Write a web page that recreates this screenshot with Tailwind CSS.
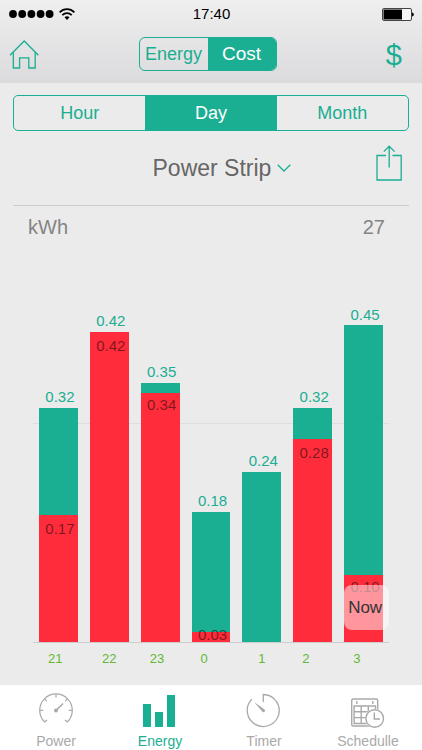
<!DOCTYPE html>
<html lang="en">
<head>
    <meta charset="UTF-8">
    <meta name="viewport" content="width=device-width, initial-scale=1.0">
    <title>Energy</title>
    <script src="https://cdn.jsdelivr.net/npm/@tailwindcss/browser@4"></script>
</head>
<body class="bg-[#ebebeb] min-h-screen flex flex-col font-['Liberation_Sans',Arial,sans-serif] text-[#1aae92]">

    <!-- Header -->
    <header class="bg-linear-to-b from-[#efeff0] to-[#dbdbdd] pb-3">
        <!-- Status bar -->
        <div class="flex items-center h-7 pl-[9px] pr-2 text-black">
            <div class="flex-1 flex items-center gap-1">
                <svg class="w-[46px] h-2" viewBox="0 0 46 8" fill="currentColor">
                    <circle cx="4" cy="4" r="3.9"/>
                    <circle cx="13.2" cy="4" r="3.9"/>
                    <circle cx="22.4" cy="4" r="3.9"/>
                    <circle cx="31.6" cy="4" r="3.9"/>
                    <circle cx="40.6" cy="4" r="3.9"/>
                </svg>
                <svg class="w-4 h-3" viewBox="0 0 16 12" fill="none" stroke="currentColor" stroke-width="1.8">
                    <path d="M0.6 4.3C4.8 0 11.2 0 15.4 4.3"/>
                    <path d="M3.3 7.2C6 4.5 10 4.5 12.7 7.2"/>
                    <path d="M5.5 9.2C7 7.8 9 7.8 10.5 9.2L8 12Z" fill="currentColor" stroke="none"/>
                </svg>
            </div>
            <span class="text-[15px]">17:40</span>
            <div class="flex-1 flex justify-end">
                <svg class="w-8 h-[13px]" viewBox="0 0 32 13">
                    <rect x="0.5" y="0.5" width="29" height="12" rx="1.5" fill="#f4f4f4" stroke="#444"/>
                    <rect x="1.5" y="1.5" width="18.5" height="10" fill="#000"/>
                    <path d="M30 4.5C32.4 5 32.4 8 30 8.5Z" fill="#000"/>
                </svg>
            </div>
        </div>

        <!-- Nav -->
        <div class="flex items-center justify-between pt-[9px] pl-[9px] pr-5">
            <a href="#" aria-label="Home">
                <svg class="w-[30px] h-[30px]" viewBox="0 0 30 30" fill="none" stroke="currentColor" stroke-width="1.3">
                    <path d="M1 16.2L15.2 2L29.4 16.2"/>
                    <path d="M4.3 13.2V29H10.6V18.8H19.8V29H26.2V13.2"/>
                </svg>
            </a>
            <div class="flex h-[34px] border border-[#1aae92] rounded-md overflow-hidden">
                <button class="w-[68px] text-lg">Energy</button>
                <button class="w-[68px] text-[19px] bg-[#1aae92] text-white">Cost</button>
            </div>
            <button class="w-[26px] h-[34px] pt-[2px] text-right text-[29px] leading-8" aria-label="Currency">$</button>
        </div>
    </header>

    <main class="px-[13px] pt-3">
        <!-- Period -->
        <div class="grid grid-cols-3 h-9 border border-[#1aae92] rounded-[5px] overflow-hidden text-lg">
            <button>Hour</button>
            <button class="bg-[#1aae92] text-white">Day</button>
            <button>Month</button>
        </div>

        <!-- Device -->
        <div class="flex items-center h-[75px] pl-[54px] pr-[7px] border-b border-[#cdcdcd]">
            <label class="flex-1 flex items-center justify-center gap-[5px]">
                <select class="appearance-none bg-transparent text-[23px] text-[#666]" aria-label="Device">
                    <option>Power Strip</option>
                </select>
                <svg class="w-[14px] h-2" viewBox="0 0 14 8" fill="none" stroke="currentColor" stroke-width="1.3">
                    <path d="M0.7 0.8L7 7L13.3 0.8"/>
                </svg>
            </label>
            <button class="mb-[10px]" aria-label="Share">
                <svg class="w-[26px] h-9" viewBox="0 0 26 36" fill="none" stroke="currentColor" stroke-width="1.3">
                    <path d="M10 10.5H1V35H25.2V10.5H16.5"/>
                    <path d="M13.2 22.5V1.2M7.8 6.6L13.2 1.2L18.6 6.6"/>
                </svg>
            </button>
        </div>

        <div class="flex justify-between pt-[9px] pb-[3px] pl-[15px] pr-6 text-xl leading-6 text-[#848484]">
            <span>kWh</span>
            <span>27</span>
        </div>
    </main>

    <!-- Chart -->
    <section class="px-[33px] pb-4">
        <div class="relative border-b border-[#cdcdcd] text-[15px] leading-5 text-center">
            <div class="absolute inset-x-0 bottom-[218px] border-t border-[#dedede]"></div>
            <div class="relative grid grid-cols-7 items-end h-[400px]">
                <div class="px-[6px]">
                    <div class="mb-px pl-[3px]">0.32</div>
                    <div class="h-[234px] bg-[#1aae92] flex flex-col justify-end">
                        <div class="h-[127px] pt-1 pl-[3px] bg-[#ff2d3c] text-black/50">0.17</div>
                    </div>
                </div>
                <div class="px-[6px]">
                    <div class="mb-px pl-[3px]">0.42</div>
                    <div class="h-[310px] pt-1 pl-[3px] bg-[#ff2d3c] text-black/50">0.42</div>
                </div>
                <div class="px-[6px]">
                    <div class="mb-px pl-[3px]">0.35</div>
                    <div class="h-[259px] bg-[#1aae92] flex flex-col justify-end">
                        <div class="h-[249px] pt-[2px] pl-[3px] bg-[#ff2d3c] text-black/50">0.34</div>
                    </div>
                </div>
                <div class="px-[6px]">
                    <div class="mb-px pl-[3px]">0.18</div>
                    <div class="h-[130px] bg-[#1aae92] flex flex-col justify-end">
                        <div class="h-[10px] pl-[3px] bg-[#ff2d3c] text-black/50 flex items-end justify-center leading-[14px]">0.03</div>
                    </div>
                </div>
                <div class="px-[6px]">
                    <div class="mb-px pl-[3px]">0.24</div>
                    <div class="h-[170px] bg-[#1aae92]"></div>
                </div>
                <div class="px-[6px]">
                    <div class="mb-px pl-[3px]">0.32</div>
                    <div class="h-[234px] bg-[#1aae92] flex flex-col justify-end">
                        <div class="h-[203px] pt-1 pl-[3px] bg-[#ff2d3c] text-black/50">0.28</div>
                    </div>
                </div>
                <div class="relative px-[6px]">
                    <div class="pl-[3px]">0.45</div>
                    <div class="h-[317px] bg-[#1aae92] flex flex-col justify-end">
                        <div class="h-[67px] pt-[2px] pl-[3px] bg-[#ff2d3c] text-black/50">0.10</div>
                    </div>
                    <div class="absolute left-[6px] right-0 bottom-3 h-[45px] pl-1 rounded-lg bg-white/50 text-left text-[17px] leading-[45px] text-[#333]">Now</div>
                </div>
            </div>
        </div>

        <div class="grid grid-cols-7 pt-[6px] text-[13px] leading-5 text-[#62b834]">
            <span class="pl-[15px]">21</span>
            <span class="text-center">22</span>
            <span class="pl-[15px]">23</span>
            <span class="pl-[15px]">0</span>
            <span class="text-center">1</span>
            <span class="pl-[15px]">2</span>
            <span class="pl-[15px]">3</span>
        </div>
    </section>

    <!-- Tab bar -->
    <nav class="mt-auto bg-white grid grid-cols-4 pl-1 pr-[2px] pt-[7px] pb-px text-sm leading-4 text-[#a9a9a9]">
        <a href="#" class="flex flex-col items-center gap-[5px]">
            <svg class="w-9 h-9" viewBox="0 0 36 36" fill="none" stroke="currentColor" stroke-width="1.2">
                <path d="M9 28L6.7 30A16.3 16.3 0 1 1 29.3 30L27 28"/>
                <path d="M18 2V5.5M6.5 6.7L8.9 9.1M29.5 6.7L27.1 9.1M1.7 18.3H5.2M34.3 18.3H30.8"/>
                <path d="M18 18.5L25 11.5" stroke-width="1.6"/>
                <circle cx="18" cy="18.5" r="2" fill="currentColor" stroke="none"/>
            </svg>
            Power
        </a>
        <a href="#" class="flex flex-col items-center gap-[5px] text-[#1aae92]">
            <svg class="w-9 h-9" viewBox="0 0 36 36" fill="currentColor">
                <rect x="1" y="12" width="8" height="23"/>
                <rect x="13" y="20" width="8" height="15"/>
                <rect x="25" y="3" width="8" height="32"/>
            </svg>
            Energy
        </a>
        <a href="#" class="flex flex-col items-center gap-[5px]">
            <svg class="w-9 h-9" viewBox="0 0 36 36" fill="none" stroke="currentColor" stroke-width="1.3">
                <path d="M17.3 10V2.5A16 16 0 1 1 5.8 7.3"/>
                <path d="M8 10L18.6 17.5A1.6 1.6 0 0 1 16.4 19.8Z" fill="currentColor" stroke="none"/>
            </svg>
            Timer
        </a>
        <a href="#" class="flex flex-col items-center gap-[5px]">
            <svg class="w-9 h-9" viewBox="0 0 36 36" fill="none" stroke="currentColor" stroke-width="1.4">
                <rect x="1.7" y="7" width="26" height="27" rx="1.5"/>
                <path d="M6.8 9V12M22.8 9V12"/>
                <path d="M4.1 14H25.5V31.5H4.1ZM11.2 14V31.5M18.3 14V31.5M4.1 19.8H25.5M4.1 25.6H25.5"/>
                <circle cx="24.7" cy="26.5" r="9.8" fill="#fff" stroke="none"/>
                <circle cx="24.7" cy="26.5" r="8.8"/>
                <path d="M24.3 20.5V27H30"/>
            </svg>
            Schedulle
        </a>
    </nav>
</body>
</html>
